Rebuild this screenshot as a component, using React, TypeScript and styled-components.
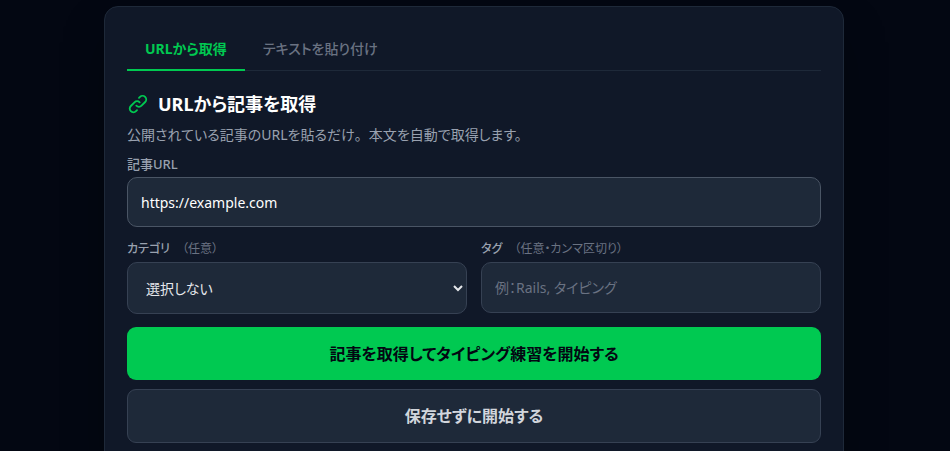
import React, { useState } from "react";
import styled, { createGlobalStyle } from "styled-components";

const GlobalStyle = createGlobalStyle`
  *, *::before, *::after { box-sizing: border-box; }
  html { background: #030712; scrollbar-width: none; }
  body { margin: 0; }
  body, button, input, select {
    font-family: "Noto Sans", "Noto Sans CJK JP", sans-serif;
    font-feature-settings: "palt";
  }
`;

const Page = styled.main`
  display: flex;
  justify-content: center;
  min-height: 100vh;
  padding: 6px 18px 24px 16px;
  overflow: hidden;
  background: #030712;
  color: #ffffff;
`;

const Card = styled.section`
  width: 100%;
  max-width: 740px;
  padding: 22px;
  border: 1px solid #1e2939;
  border-radius: 14px;
  background: #101828;
  box-shadow: 0 24px 48px -12px rgba(0, 0, 0, 0.5);
`;

const TabBar = styled.div`
  display: flex;
  margin-bottom: 19px;
  border-bottom: 1px solid #1e2939;
`;

const Tab = styled.button<{ $active: boolean }>`
  height: 42px;
  margin-bottom: -1px;
  padding: 0 18px 2px;
  border: 0;
  border-bottom: 2px solid ${(p) => (p.$active ? "#00c951" : "transparent")};
  background: transparent;
  color: ${(p) => (p.$active ? "#00c951" : "#6a7282")};
  font-size: 14px;
  font-weight: ${(p) => (p.$active ? 700 : 500)};
  cursor: pointer;
`;

const Form = styled.form`
  display: flex;
  flex-direction: column;
`;

const Heading = styled.h2`
  display: flex;
  align-items: center;
  gap: 9px;
  margin: 0;
  font-size: 18px;
  font-weight: 700;
  line-height: 28px;
`;

const LinkGlyph = styled.svg`
  width: 22px;
  height: 22px;
  flex: none;
  fill: none;
  stroke: #00c951;
  stroke-width: 2;
  stroke-linecap: round;
  stroke-linejoin: round;
`;

const Lead = styled.p`
  margin: 7px 0 10px;
  color: #99a1af;
  font-size: 14px;
  line-height: 20px;
`;

const FullWidth = styled.span`
  font-feature-settings: normal;
`;

const Columns = styled.div`
  display: grid;
  grid-template-columns: 1fr 1fr;
  gap: 14px;
  margin: 13px 0;
`;

const Label = styled.label<{ $wide?: boolean }>`
  display: block;
  margin-bottom: 4px;
  color: #99a1af;
  font-size: ${(p) => (p.$wide ? 13 : 12)}px;
  font-weight: 500;
  line-height: 18px;
`;

const Optional = styled.span`
  margin-left: 12px;
  color: #6a7282;
  font-weight: 400;
`;

const TextInput = styled.input<{ $strong?: boolean }>`
  display: block;
  width: 100%;
  height: ${(p) => (p.$strong ? 50 : 51)}px;
  padding: 0 13px;
  border: 1px solid ${(p) => (p.$strong ? "#4a5565" : "#364153")};
  border-radius: 10px;
  outline: none;
  background: #1e2939;
  color: #ffffff;
  font-size: 14px;

  &::placeholder { color: #6a7282; opacity: 1; }
`;

const Select = styled.select`
  display: block;
  width: 100%;
  height: 52px;
  padding: 0 14px;
  border: 1px solid #364153;
  border-radius: 10px;
  background: #1e2939;
  color: #e5e7eb;
  font-size: 14px;
`;

const Actions = styled.div`
  display: flex;
  flex-direction: column;
  gap: 9px;
`;

const Action = styled.button<{ $primary?: boolean }>`
  height: ${(p) => (p.$primary ? 53 : 54)}px;
  padding: 0 16px 2px;
  border: ${(p) => (p.$primary ? "0" : "1px solid #364153")};
  border-radius: 9px;
  background: ${(p) => (p.$primary ? "#00c951" : "#1e2939")};
  color: ${(p) => (p.$primary ? "#030712" : "#d1d5dc")};
  font-size: 16px;
  font-weight: 700;
  cursor: pointer;
`;

const TABS = ["URLから取得", "テキストを貼り付け"];

export default function App() {
  const [tab, setTab] = useState(0);
  return (
    <>
      <GlobalStyle />
      <Page>
        <Card>
          <TabBar role="tablist">
            {TABS.map((name, i) => (
              <Tab key={name} type="button" role="tab" aria-selected={tab === i} $active={tab === i} onClick={() => setTab(i)}>
                {name}
              </Tab>
            ))}
          </TabBar>
          <Form onSubmit={(e) => e.preventDefault()}>
            <Heading>
              <LinkGlyph viewBox="0 0 24 24" aria-hidden="true">
                <path d="M13.828 10.172a4 4 0 0 0-5.656 0l-4 4a4 4 0 1 0 5.656 5.656l1.102-1.101m-.758-4.899a4 4 0 0 0 5.656 0l4-4a4 4 0 0 0-5.656-5.656l-1.1 1.1" />
              </LinkGlyph>
              URLから記事を取得
            </Heading>
            <Lead>
              公開されている記事のURLを貼るだけ<FullWidth>。</FullWidth>本文を自動で取得します。
            </Lead>
            <div>
              <Label htmlFor="url" $wide>記事URL</Label>
              <TextInput id="url" type="url" defaultValue="https://example.com" $strong />
            </div>
            <Columns>
              <div>
                <Label htmlFor="category">カテゴリ<Optional>（任意）</Optional></Label>
                <Select id="category">
                  <option>選択しない</option>
                </Select>
              </div>
              <div>
                <Label htmlFor="tags">タグ<Optional>（任意・カンマ区切り）</Optional></Label>
                <TextInput id="tags" type="text" placeholder="例：Rails, タイピング" />
              </div>
            </Columns>
            <Actions>
              <Action type="submit" $primary>記事を取得してタイピング練習を開始する</Action>
              <Action type="button">保存せずに開始する</Action>
            </Actions>
          </Form>
        </Card>
      </Page>
    </>
  );
}
